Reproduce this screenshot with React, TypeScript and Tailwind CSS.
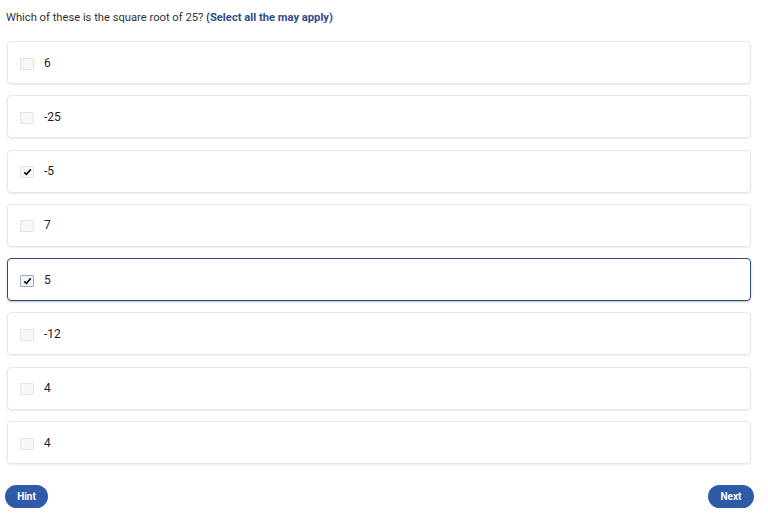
import React, { useState } from 'react';

const options = ['6', '-25', '-5', '7', '5', '-12', '4', '4'];

export default function App() {
  const [checked, setChecked] = useState<number[]>([2, 4]);
  const focused = 4;

  const toggle = (i: number) =>
    setChecked((c) => (c.includes(i) ? c.filter((x) => x !== i) : [...c, i]));

  return (
    <div className="w-[768px] h-[518px] bg-white text-[#333] font-['Roboto',sans-serif] flex flex-col">
      <div className="pl-[6px] pt-[11px] h-[41px] text-[11.2px] leading-[14px]">
        Which of these is the square root of 25?{' '}
        <span className="font-bold text-[#2e4d86]">(Select all the may apply)</span>
      </div>

      <div className="pl-[7px] pr-[17px] flex flex-col gap-[11.3px]">
        {options.map((opt, i) => {
          const isChecked = checked.includes(i);
          const isFocus = i === focused;
          return (
            <div
              key={i}
              onClick={() => toggle(i)}
              className={`h-[43px] rounded-[4px] flex items-center pl-[12px] gap-[10px] cursor-pointer ${
                isFocus
                  ? 'border border-[#2f4c7c] shadow-[0_1px_2px_rgba(0,0,0,0.25)]'
                  : 'border border-[#e6e6e6] shadow-[0_1px_2px_rgba(0,0,0,0.08)]'
              }`}
            >
              <div
                className={`w-[14px] h-[12px] mt-[2px] rounded-[1px] flex items-center justify-center ${
                  isFocus ? 'border border-[#9aa6d6] bg-[#f4f5fb]' : 'border border-[#e4e4e4] bg-[#f7f7f7]'
                }`}
              >
                {isChecked && (
                  <svg width="9" height="8" viewBox="0 0 9 8">
                    <path d="M1.2 4.3 L3.4 6.4 L7.8 1.4" fill="none" stroke="#111" strokeWidth="1.6" />
                  </svg>
                )}
              </div>
              <span className="text-[12px] leading-[14px] text-[#222]">{opt}</span>
            </div>
          );
        })}
      </div>

      <div className="flex justify-between items-center pl-[5px] pr-[14px] mt-[21px]">
        <button className="h-[23px] w-[43px] rounded-full bg-[#2f5aa8] text-white text-[10px] font-bold">
          Hint
        </button>
        <button className="h-[23px] w-[46px] rounded-full bg-[#2f5aa8] text-white text-[10px] font-bold">
          Next
        </button>
      </div>
    </div>
  );
}
